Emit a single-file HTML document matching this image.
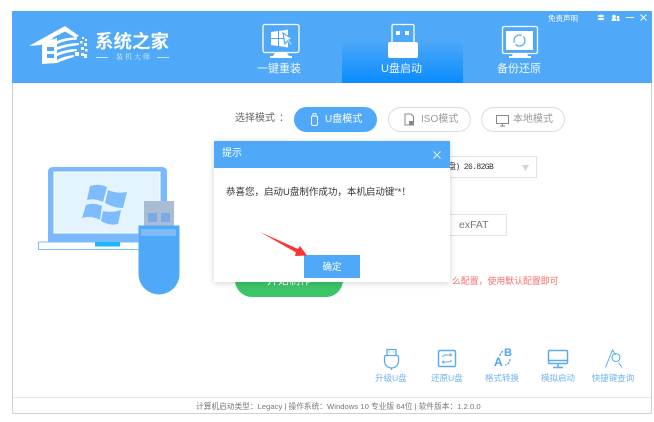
<!DOCTYPE html>
<html lang="zh-CN">
<head>
<meta charset="utf-8">
<style>
html,body{margin:0;padding:0;background:#fff;width:654px;height:422px;overflow:hidden}
body{position:relative;font-family:"Liberation Sans","Noto Sans CJK SC",sans-serif}
.a{position:absolute;white-space:nowrap}
svg{position:absolute;left:0;top:0}
.mode{position:absolute;height:25px;border-radius:13px;box-sizing:border-box;border:1px solid #dcdcdc;color:#999;font-size:10px;line-height:24px;white-space:nowrap}
.tl{position:absolute;font-size:8.5px;color:#6fb4f2;text-align:center;top:372px;white-space:nowrap}
</style>
</head>
<body>
<!-- window -->
<div class="a" style="left:12px;top:11px;width:640px;height:403px;box-sizing:border-box;border:1px solid #cfd3d6;border-top:0"></div>
<div class="a" style="left:12px;top:11px;width:640px;height:72px;background:#4fa9f8"></div>
<div class="a" style="left:342px;top:11px;width:121px;height:72px;background:linear-gradient(#4fa9f8 0,#4fa9f8 40%,#0a8cff 100%)"></div>
<div class="a" style="left:13px;top:397px;width:638px;height:1px;background:#e4e6e8"></div>

<svg width="654" height="422" viewBox="0 0 654 422">
  <!-- logo -->
  <g fill="#fff">
    <path d="M29 46 L65 26 L79 36 L75 37.500 L65 31.500 L54 37 L49 42 L42 44 L41 45Z"/>
    <path d="M42 43 L57 38 V63 L42 64Z"/>
    <path d="M47 47 H54 V51 H47Z M47 54 H54 V58 H47Z" fill="#4fa9f8"/>
    <path d="M57 41 Q66 37 77 37.500 V39.500 Q66 40 57 44 Z"/>
    <path d="M57 47 Q68 43 79 43 V45 Q68 46 57 50 Z"/>
    <path d="M57 53 Q67 49 77 49 V51 Q67 52 57 56 Z"/>
    <path d="M57 60 Q64 56 74 55 V57 Q66 59 57 63 Z"/>
    <rect x="82" y="37" width="2" height="2"/><rect x="85" y="39" width="2" height="2"/><rect x="84" y="43" width="3" height="3"/>
    <rect x="80" y="41" width="2.500" height="2.500"/><rect x="81" y="47" width="3" height="3"/><rect x="85" y="49" width="2.500" height="2.500"/>
    <rect x="75" y="52" width="4" height="4"/><rect x="81" y="53" width="3" height="3"/><rect x="84" y="54" width="3" height="4"/>
  </g>
  <g stroke="#cfe5fb" stroke-width="1"><path d="M96 57.500H108M157 57.500H169"/></g>

  <!-- 一键重装 icon -->
  <rect x="263" y="24.500" width="36" height="28" rx="2" fill="none" stroke="#fff" stroke-width="1.300"/>
  <path d="M275 53h12l2 3h3v2h-22v-2h3z" fill="#fff"/>
  <path d="M271 32l7-1v7h-7zM279 31l9-1.500V38h-9zM271 39h7v7l-7-1zM279 39h9v8.500l-9-1.500z" fill="#fff"/>
  <path d="M283 33l2 11 2.500-3 3.500 4.500 1.500-1.200-3.500-4.300 3.500-1z" fill="#fff" stroke="#4fa9f8" stroke-width="1.200"/>

  <!-- U盘启动 icon -->
  <rect x="392" y="24.500" width="22" height="20" rx="1.500" fill="none" stroke="#fff" stroke-width="1.300"/>
  <rect x="396" y="31" width="4" height="4" fill="#fff"/><rect x="405" y="31" width="4" height="4" fill="#fff"/>
  <path d="M390 42h26q2 0 2 2v12q0 2-2 2h-26q-2 0-2-2V44q0-2 2-2z" fill="#fff"/>

  <!-- 备份还原 icon -->
  <rect x="502.500" y="26.500" width="35" height="27" rx="2" fill="none" stroke="#fff" stroke-width="1.300"/>
  <rect x="506" y="31" width="27" height="19" fill="#fff"/>
  <path d="M513 53h14l1 3h3v2h-22v-2h3z" fill="#fff"/>
  <circle cx="519.500" cy="40.500" r="5.500" fill="none" stroke="#4fa9f8" stroke-width="1.200" stroke-dasharray="13 2"/>

  <!-- top right icons -->
  <path d="M597 16l4-1.500 4 1.500-4 1.500zM598 18h6v1.500q-3 1.500-6 0z" fill="#fff"/>
  <circle cx="614" cy="16.500" r="1.800" fill="#fff"/><path d="M611.500 21q0-3 2.500-3t2.500 3z" fill="#fff"/><circle cx="618" cy="17" r="1.300" fill="#fff"/><path d="M617 21v-2.500h2.500v2.500z" fill="#fff"/>
  <path d="M626 17.500h8" stroke="#fff" stroke-width="1"/>
  <path d="M640.500 14.500l6 6M646.500 14.500l-6 6" stroke="#fff" stroke-width="1"/>

  <!-- laptop -->
  <path d="M53 167h109q5 0 5 5v70H48v-70q0-5 5-5z" fill="#7abafc"/>
  <rect x="54" y="172" width="106" height="61" fill="#e4f4fe" stroke="#fff" stroke-width="1"/>
  <rect x="38.500" y="242" width="125" height="7.500" fill="#fff" stroke="#7db8fc" stroke-width="1"/>
  <rect x="95" y="242" width="25" height="4.500" fill="#1fb8ff"/>
  <g fill="#7fbcfd">
    <path d="M90 186Q98 183 107 187L103 202Q95 198 87 200Z"/>
    <path d="M108 190Q117 194 127 192L123 208Q114 208 105 203Z"/>
    <path d="M86 205Q94 202 102 206L100 220Q91 215 82 218Z"/>
    <path d="M103 211Q112 213 121 210L118 224Q109 226 101 221Z"/>
  </g>
  <!-- usb -->
  <rect x="144" y="201" width="30" height="26" fill="#a9bcd4"/>
  <rect x="148" y="213" width="9" height="9" fill="#7aa9e6"/><rect x="161" y="213" width="9" height="9" fill="#7aa9e6"/>
  <path d="M138.500 225.500h41V274a20.500 20.500 0 0 1-41 0z" fill="#4fa9f8"/>
  <rect x="141" y="229" width="35" height="7" fill="#7cbcfb"/>

  <!-- bottom tool icons -->
  <g fill="none" stroke="#5aabf3" stroke-width="1.300">
    <path d="M387 349.500h9v6h-9zM386 355.500h11q1.500 0 1.500 1.500v4a7 7 0 0 1-14 0v-4q0-1.500 1.500-1.500zM391.500 368v2"/>
    <path d="M389 352h1M393 352h1" stroke-width="1"/>
    <rect x="438.500" y="350.500" width="17" height="16" rx="1.500" stroke-width="1.500"/>
    <path d="M442.500 357q1-2 3-2h5M450 353.500l1.500 1.500-1.500 1M451.500 360q-1 2-3 2h-5M444 363.500l-1.500-1.500 1.500-1" stroke-width="1.100"/>
    <path d="M500 356q0-4 4-5M510 359q0 5-5 6" stroke-dasharray="2.500 1"/>
    <rect x="548.500" y="350.500" width="19" height="13" rx="1" stroke-width="1.500"/>
    <path d="M549 360.500h18M558 364v3M553 367.500h10" stroke-width="1.500"/>
    <path d="M605.500 367.500l7-17.500 3 5M622 367.500l-3.500-5" stroke-width="1"/>
    <circle cx="616" cy="357.500" r="4" stroke-width="1.100"/>
  </g>

  <!-- select boxes and misc. -->
  <rect x="440.500" y="156.500" width="96" height="21" fill="#fff" stroke="#e3e3e3"/>
  <path d="M522 165h7l-3.500 6z" fill="#d9d4d4"/>
  <rect x="440.500" y="214.500" width="66" height="21" fill="#fff" stroke="#e3e3e3"/>
</svg>

<!-- logo text -->
<div class="a" style="left:95px;top:31px;font-size:18.500px;line-height:22px;font-weight:700;color:#fff">系统之家</div>
<div class="a" style="left:116px;top:52px;font-size:7px;line-height:10px;color:#dcecfc;letter-spacing:2px;font-family:'Liberation Serif','Noto Serif CJK SC',serif">装机大师</div>

<!-- tabs -->
<div class="a" style="left:257px;top:62px;font-size:11px;line-height:15px;color:#f2f8ff">一键重装</div>
<div class="a" style="left:381px;top:62px;font-size:11px;line-height:15px;color:#f2f8ff">U盘启动</div>
<div class="a" style="left:497px;top:62px;font-size:11px;line-height:15px;color:#f2f8ff">备份还原</div>
<div class="a" style="left:548px;top:13px;font-size:7.500px;line-height:11px;color:#fff">免责声明</div>

<!-- mode row -->
<div class="a" style="left:235px;top:111px;font-size:10px;line-height:16px;color:#666">选择模式<span style="margin-left:4px">&#xFF1A;</span></div>
<div class="mode" style="left:294px;top:107px;width:83px;background:#4fa9f8;border-color:#4fa9f8;color:#fff;padding-left:30px">U盘模式</div>
<svg width="654" height="422" viewBox="0 0 654 422" style="z-index:1">
  <rect x="311.500" y="116" width="6" height="9.500" rx="1.500" fill="none" stroke="#fff"/>
  <rect x="313" y="113.500" width="3" height="2.500" fill="none" stroke="#fff" stroke-width=".8"/>
</svg>
<div class="mode" style="left:388px;top:107px;width:83px;padding-left:32px">ISO模式</div>
<div class="mode" style="left:481px;top:107px;width:84px;padding-left:31px">本地模式</div>
<svg width="654" height="422" viewBox="0 0 654 422" style="z-index:1">
  <path d="M405 114h6l2.500 2.500V125h-8.500z" fill="none" stroke="#888" stroke-width="1"/>
  <rect x="409" y="121" width="4" height="4" fill="#888"/>
  <rect x="496.500" y="115.500" width="12" height="8" fill="none" stroke="#888"/>
  <path d="M500 126h5M502.500 124v2" stroke="#888"/>
</svg>

<div class="a" style="left:448px;top:162px;font-size:8px;line-height:12px;color:#333;font-family:'Liberation Mono','Noto Sans CJK SC',monospace;letter-spacing:-.6px">盘) 26.82GB</div>
<div class="a" style="left:459px;top:219px;font-size:10.500px;line-height:13px;color:#777">exFAT</div>

<!-- green button -->
<div class="a" style="left:235px;top:262px;width:108px;height:35px;border-radius:17px;background:#3cc568;color:#fff;font-size:11px;line-height:38px;text-align:center">开始制作</div>
<!-- red notice -->
<div class="a" style="left:452px;top:274px;font-size:8.900px;line-height:14px;color:#fb6b6b">么配置&#xFF0C;使用默认配置即可</div>

<!-- modal -->
<div class="a" style="left:214px;top:141px;width:236px;height:141px;background:#fff;box-shadow:0 1px 6px rgba(0,0,0,.18)">
  <div style="height:27px;background:#4fa9f8;position:relative">
    <div class="a" style="left:8px;top:6px;font-size:10px;line-height:14px;color:#fff">提示</div>
    <svg width="10" height="10" viewBox="0 0 10 10" style="left:218px;top:9px"><path d="M1.500 1.500l7 7M8.500 1.500l-7 7" stroke="#e8f4ff" stroke-width="1" fill="none"/></svg>
  </div>
  <div class="a" style="left:12px;top:45px;font-size:9.500px;line-height:14px;color:#333">恭喜您&#xFF0C;启动U盘制作成功&#xFF0C;本机启动键"*&#xFF01;</div>
  <div class="a" style="left:90px;top:114px;width:56px;height:23px;background:#4fa9f8;color:#fff;font-size:9.500px;line-height:26px;text-align:center">确定</div>
</div>
<!-- arrow -->
<svg width="654" height="422" viewBox="0 0 654 422" style="z-index:3">
  <path d="M260 232 L298 249 L300 246 L307 255.500 L295 256 L296 252.500 Z" fill="#f93434"/>
</svg>

<!-- tools -->
<div class="tl" style="left:370px;width:42px">升级U盘</div>
<div class="tl" style="left:426px;width:42px">还原U盘</div>
<div class="tl" style="left:481px;width:42px">格式转换</div>
<div class="tl" style="left:537px;width:42px">模拟启动</div>
<div class="tl" style="left:590px;width:46px">快捷键查询</div>
<div class="a" style="left:494px;top:356px;font-size:12px;line-height:13px;font-weight:700;color:#4fa5f3">A</div>
<div class="a" style="left:504px;top:347px;font-size:11px;line-height:12px;font-weight:700;color:#4fa5f3">B</div>

<!-- footer -->
<div class="a" style="left:196px;top:401px;font-size:7.700px;line-height:12px;color:#777">计算机启动类型&#xFF1A;Legacy | 操作系统&#xFF1A;Windows 10 专业版 64位 | 软件版本&#xFF1A;1.2.0.0</div>
</body>
</html>
